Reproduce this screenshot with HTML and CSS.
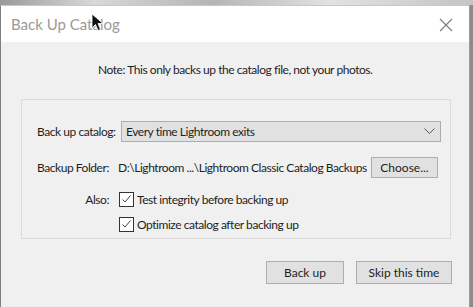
FILE: index.html
```html
<!DOCTYPE html>
<html lang="en">
<head>
    <meta charset="UTF-8">
    <title>Back Up Catalog</title>
    <link rel="stylesheet" href="styles.css">
</head>
<body>

    <div class="desk-strip"></div>

    <div class="dialog">
        <!-- Title bar -->
        <div class="dialog-title">
            <span class="title-text">Back Up Catalog</span>
            <svg class="close-icon" width="14" height="14" viewBox="0 0 14 14">
                <path d="M1 1 L13 13 M13 1 L1 13" stroke="#7a7a7a" stroke-width="1.1" fill="none"/>
            </svg>
        </div>

        <div class="dialog-body">
            <p class="note">Note: This only backs up the catalog file, not your photos.</p>

            <div class="group-box">
                <div class="row row-catalog">
                    <span class="label">Back up catalog:</span>
                    <div class="select">
                        <span>Every time Lightroom exits</span>
                        <svg width="11" height="7" viewBox="0 0 11 7">
                            <path d="M0.5 0.5 L5.5 5.5 L10.5 0.5" stroke="#555" stroke-width="1" fill="none"/>
                        </svg>
                    </div>
                </div>

                <div class="row row-folder">
                    <span class="label">Backup Folder:</span>
                    <span class="path">D:\Lightroom ...\Lightroom Classic Catalog Backups</span>
                    <button class="btn btn-choose">Choose...</button>
                </div>

                <div class="row row-also">
                    <span class="label label-also">Also:</span>
                    <label class="check">
                        <span class="box"><svg width="13" height="13" viewBox="0 0 13 13"><path d="M2.5 6.5 L5 9 L10.5 2.5" stroke="#444" stroke-width="1" fill="none"/></svg></span>
                        Test integrity before backing up
                    </label>
                </div>

                <div class="row row-also2">
                    <label class="check">
                        <span class="box"><svg width="13" height="13" viewBox="0 0 13 13"><path d="M2.5 6.5 L5 9 L10.5 2.5" stroke="#444" stroke-width="1" fill="none"/></svg></span>
                        Optimize catalog after backing up
                    </label>
                </div>
            </div>

            <div class="actions">
                <button class="btn btn-action">Back up</button>
                <button class="btn btn-skip">Skip this time</button>
            </div>
        </div>

        <!-- mouse pointer over the title -->
        <svg class="cursor" width="14" height="20" viewBox="0 0 14 20">
            <path d="M1 1 L1 15 L4.5 11.5 L7 17.5 L9.5 16.5 L7 10.5 L12 10.5 Z" fill="#111" stroke="#fff" stroke-width="0.8"/>
        </svg>
    </div>

</body>
</html>
```

FILE: styles.css
```css
/* Page */
body {
    margin: 0;
    background: #8c8c8c;
    font-family: Lato, "Liberation Sans", sans-serif;
    font-size: 12px;
    letter-spacing: -0.45px;
    color: #1e1e1e;
    overflow: hidden;
}

.desk-strip {
    height: 5px;
    background: linear-gradient(90deg, #9a9a9a, #d8d8d8 20%, #b5b5b5 45%, #e2e2e2 70%, #c4c4c4);
}

/* Window */
.dialog {
    position: relative;
    width: 468px;
    height: 302px;
    border-left: 1px solid #7f7f7f;
    border-right: 1px solid #9b9b9b;
    border-top: 1px solid #c8c8c8;
    background: #f0f0f0;
}

.dialog-title {
    display: flex;
    align-items: center;
    justify-content: space-between;
    height: 36px;
    padding: 0 16px 0 10px;
    background: #fff;
}

.title-text {
    font-size: 15px;
    letter-spacing: 0;
    color: #9a9a9a;
}

.close-icon {
    margin-top: 1px;
}

.dialog-body {
    padding: 16px 0 0 20px;
}

.note {
    margin: 0;
    padding-left: 77px;
    line-height: 24px;
}

/* Group */
.group-box {
    width: 430px;
    height: 140px;
    margin-top: 17px;
    border: 1px solid #dcdcdc;
    box-sizing: border-box;
    padding: 21px 0 0 15px;
}

.row {
    display: flex;
    align-items: center;
}

.label {
    white-space: nowrap;
    flex-shrink: 0;
}

.row-catalog .label {
    width: 84px;
}

.select {
    display: flex;
    align-items: center;
    justify-content: space-between;
    width: 320px;
    height: 21px;
    flex-shrink: 0;
    box-sizing: border-box;
    padding: 0 5px 0 4px;
    background: #e1e1e1;
    border: 1px solid #adadad;
}

.row-folder {
    margin-top: 15px;
}

.row-folder .label {
    width: 81px;
}

.path {
    width: 253px;
    flex-shrink: 0;
    white-space: nowrap;
}

.btn {
    font-family: inherit;
    font-size: 12px;
    color: #1e1e1e;
    background: #e1e1e1;
    border: 1px solid #adadad;
    padding: 0;
    flex-shrink: 0;
}

.btn-choose {
    width: 67px;
    height: 21px;
}

.btn-action,
.btn-skip {
    letter-spacing: 0;
}

.row-also {
    margin-top: 14px;
}

.label-also {
    width: 82px;
    text-align: right;
    box-sizing: border-box;
    padding: 0 10px 0 47px;
}

.check {
    display: flex;
    align-items: center;
    gap: 3px;
    white-space: nowrap;
}

.row-also2 {
    margin-top: 10px;
    padding-left: 82px;
}

.box {
    display: flex;
    width: 15px;
    height: 15px;
    box-sizing: border-box;
    border: 1px solid #333;
    background: #fff;
    align-items: center;
    justify-content: center;
}

/* Bottom buttons */
.actions {
    display: flex;
    gap: 12px;
    padding-left: 245px;
    margin-top: 22px;
}

.btn-action {
    width: 78px;
    height: 23px;
}

.btn-skip {
    width: 96px;
    height: 23px;
}

.cursor {
    position: absolute;
    left: 90px;
    top: 7px;
}
```
